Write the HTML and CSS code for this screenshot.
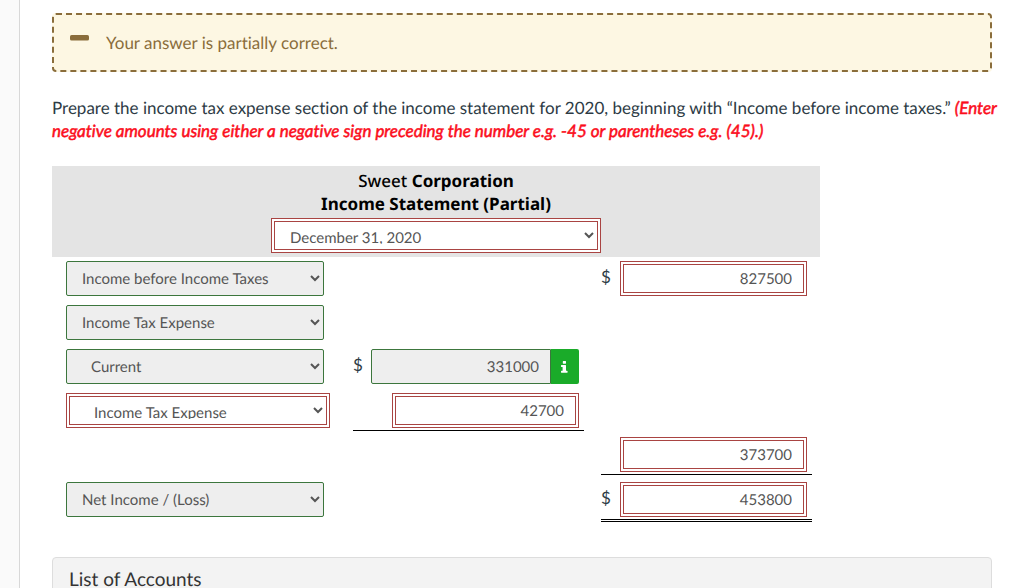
FILE: index.html
```html
<!DOCTYPE html>
<html lang="en">
<head>
<meta charset="utf-8">
<title>Income Statement</title>
<link rel="stylesheet" href="styles.css">
</head>
<body>
<main class="page">
  <div class="alert" role="status">
    <svg class="alert-icon" width="19" height="6" viewBox="0 0 19 6" aria-hidden="true"><rect width="19" height="5.5" rx="1.6" fill="#8a6d3b"/></svg>
    <span>Your answer is partially correct.</span>
  </div>

  <p class="prompt">Prepare the income tax expense section of the income statement for 2020, beginning with “Income before income taxes.” <em class="hint">(Enter negative amounts using either a negative sign preceding the number e.g. -45 or parentheses e.g. (45).)</em></p>

  <table class="statement">
    <colgroup><col><col class="col-mid"><col class="col-gap"><col class="col-right"><col class="col-end"></colgroup>
    <thead>
      <tr>
        <th colspan="5">
          <div class="title"><span class="company">Sweet</span> Corporation</div>
          <div class="title">Income Statement (Partial)</div>
          <select class="field wrong period" aria-label="Statement period"><option>December 31, 2020</option></select>
        </th>
      </tr>
    </thead>
    <tbody>
      <tr>
        <td class="label"><select class="field right" aria-label="Line 1"><option>Income before Income Taxes</option></select></td>
        <td></td><td></td>
        <td class="amount"><div class="money"><span class="sign">$</span><input class="field wrong" type="text" value="827500" aria-label="Line 1 amount"></div></td>
        <td></td>
      </tr>
      <tr>
        <td class="label"><select class="field right" aria-label="Line 2"><option>Income Tax Expense</option></select></td>
        <td></td><td></td><td></td><td></td>
      </tr>
      <tr>
        <td class="label"><select class="field right indent" aria-label="Line 3"><option>Current</option></select></td>
        <td class="amount"><div class="money"><span class="sign">$</span><input class="field right with-info" type="text" value="331000" aria-label="Line 3 amount"><button class="info" type="button" aria-label="Information"><svg width="7" height="12" viewBox="0 0 7 12" aria-hidden="true"><path fill="#fff" d="M1.8.4Q1.8 0 2.2 0h2.4Q5 0 5 .4v1.9q0 .4-.4.4H2.200q-.4 0-.4-.4zM.4 4h4.200q.4 0 .4.4v5.400h1q.6 0 .6.4v1.100q0 .4-.4.4H.4q-.4 0-.4-.4v-1.100q0-.4.4-.4h1.200V5.900H.4Q0 5.900 0 5.500V4.400Q0 4 .4 4z"/></svg></button></div></td>
        <td></td><td></td><td></td>
      </tr>
      <tr>
        <td class="label"><select class="field wrong" aria-label="Line 4"><option>Income Tax Expense</option></select></td>
        <td class="amount"><div class="money subtotal"><input class="field wrong" type="text" value="42700" aria-label="Line 4 amount"></div></td>
        <td></td><td></td><td></td>
      </tr>
      <tr class="tall">
        <td></td><td></td><td></td>
        <td class="amount"><div class="money subtotal"><input class="field wrong" type="text" value="373700" aria-label="Total income tax expense"></div></td>
        <td></td>
      </tr>
      <tr class="tall">
        <td class="label"><select class="field right" aria-label="Line 6"><option>Net Income / (Loss)</option></select></td>
        <td></td><td></td>
        <td class="amount"><div class="money total"><span class="sign">$</span><input class="field wrong" type="text" value="453800" aria-label="Line 6 amount"></div></td>
        <td></td>
      </tr>
    </tbody>
  </table>

  <section class="panel"><h2 class="panel-title">List of Accounts</h2></section>
</main>
</body>
</html>
```
FILE: styles.css
```css
* { box-sizing: border-box; }

html { background: #fafafa; }

body {
  margin: 0 0 0 19px;
  height: 100vh;
  overflow: hidden;
  border-left: 1px solid #d8d8d8;
  background: #fff;
  color: #2d3b45;
  font: 17px/23px Lato, "Liberation Sans", sans-serif;
  font-variant-ligatures: none;
  text-rendering: geometricPrecision;
}

.page { padding: 13px 32px 0; }

.alert {
  display: flex;
  gap: 17px;
  padding: 16px;
  border: 2px dashed #8a6d3b;
  border-radius: 4px;
  background: #fdf7e3;
  color: #8a6d3b;
}

.alert-icon { margin-top: 4px; }

.prompt { margin: 24px -16px 24px 0; }

.hint { color: #fb0d1b; -webkit-text-stroke: 0.03em; }

.statement {
  width: 100%;
  max-width: 768px;
  border-collapse: collapse;
  table-layout: fixed;
}

.col-mid { width: 231px; }
.col-gap { width: 17px; }
.col-right { width: 211px; }
.col-end { width: 8px; }

.statement th {
  padding: 3px 0 4px;
  background: #e4e4e4;
  color: #000;
  font-family: "Noto Sans", sans-serif;
  line-height: 23px;
}

.company { font-weight: 500; }

.statement td { height: 44px; padding: 0; vertical-align: top; }
.statement .tall td { height: 45px; }
.statement .label { padding: 4px 0 0 14px; }

.field {
  display: block;
  width: 258px;
  height: 35px;
  margin: 0;
  padding: 0 11px;
  border: 1px solid;
  border-radius: 2px;
  color: #555;
  font: 15px/20px Lato, "Liberation Sans", sans-serif;
  text-rendering: inherit;
}

.right { border-color: #3c763d; background-color: #eee; }

.wrong {
  height: 29px;
  margin: 3px;
  border-color: #a94442;
  border-radius: 0;
  background-color: #fff;
  box-shadow: 0 0 0 3px #fff;
  outline: 1px solid #a94442;
  outline-offset: 2px;
}

select.indent { padding-left: 20px; }
select.wrong { padding: 6px 3px 5px 20px; }
select.period { width: 324px; margin: 6px auto 3px; padding-left: 11px; }

.money {
  display: flex;
  justify-content: flex-end;
  padding: 4px 5px 2px 0;
}

.sign { margin: 4px auto 0 0; }

input.field { text-align: right; }
input.wrong { width: 181px; }
input.with-info { width: 180px; border-radius: 2px 0 0 2px; }

.info {
  display: grid;
  place-items: center;
  width: 28px;
  height: 35px;
  padding: 0;
  border: 0;
  border-radius: 0 2px 2px 0;
  background: #1aab29;
}

.subtotal { border-bottom: 1px solid #000; }
.total { border-bottom: 3px double #000; }

.panel {
  margin-top: 34px;
  border: 1px solid #ddd;
  border-radius: 4px;
  background: #f3f3f3;
}

.panel-title {
  margin: 0;
  padding: 10px 16px;
  color: #333;
  font-size: 19px;
  font-weight: 400;
}
```
